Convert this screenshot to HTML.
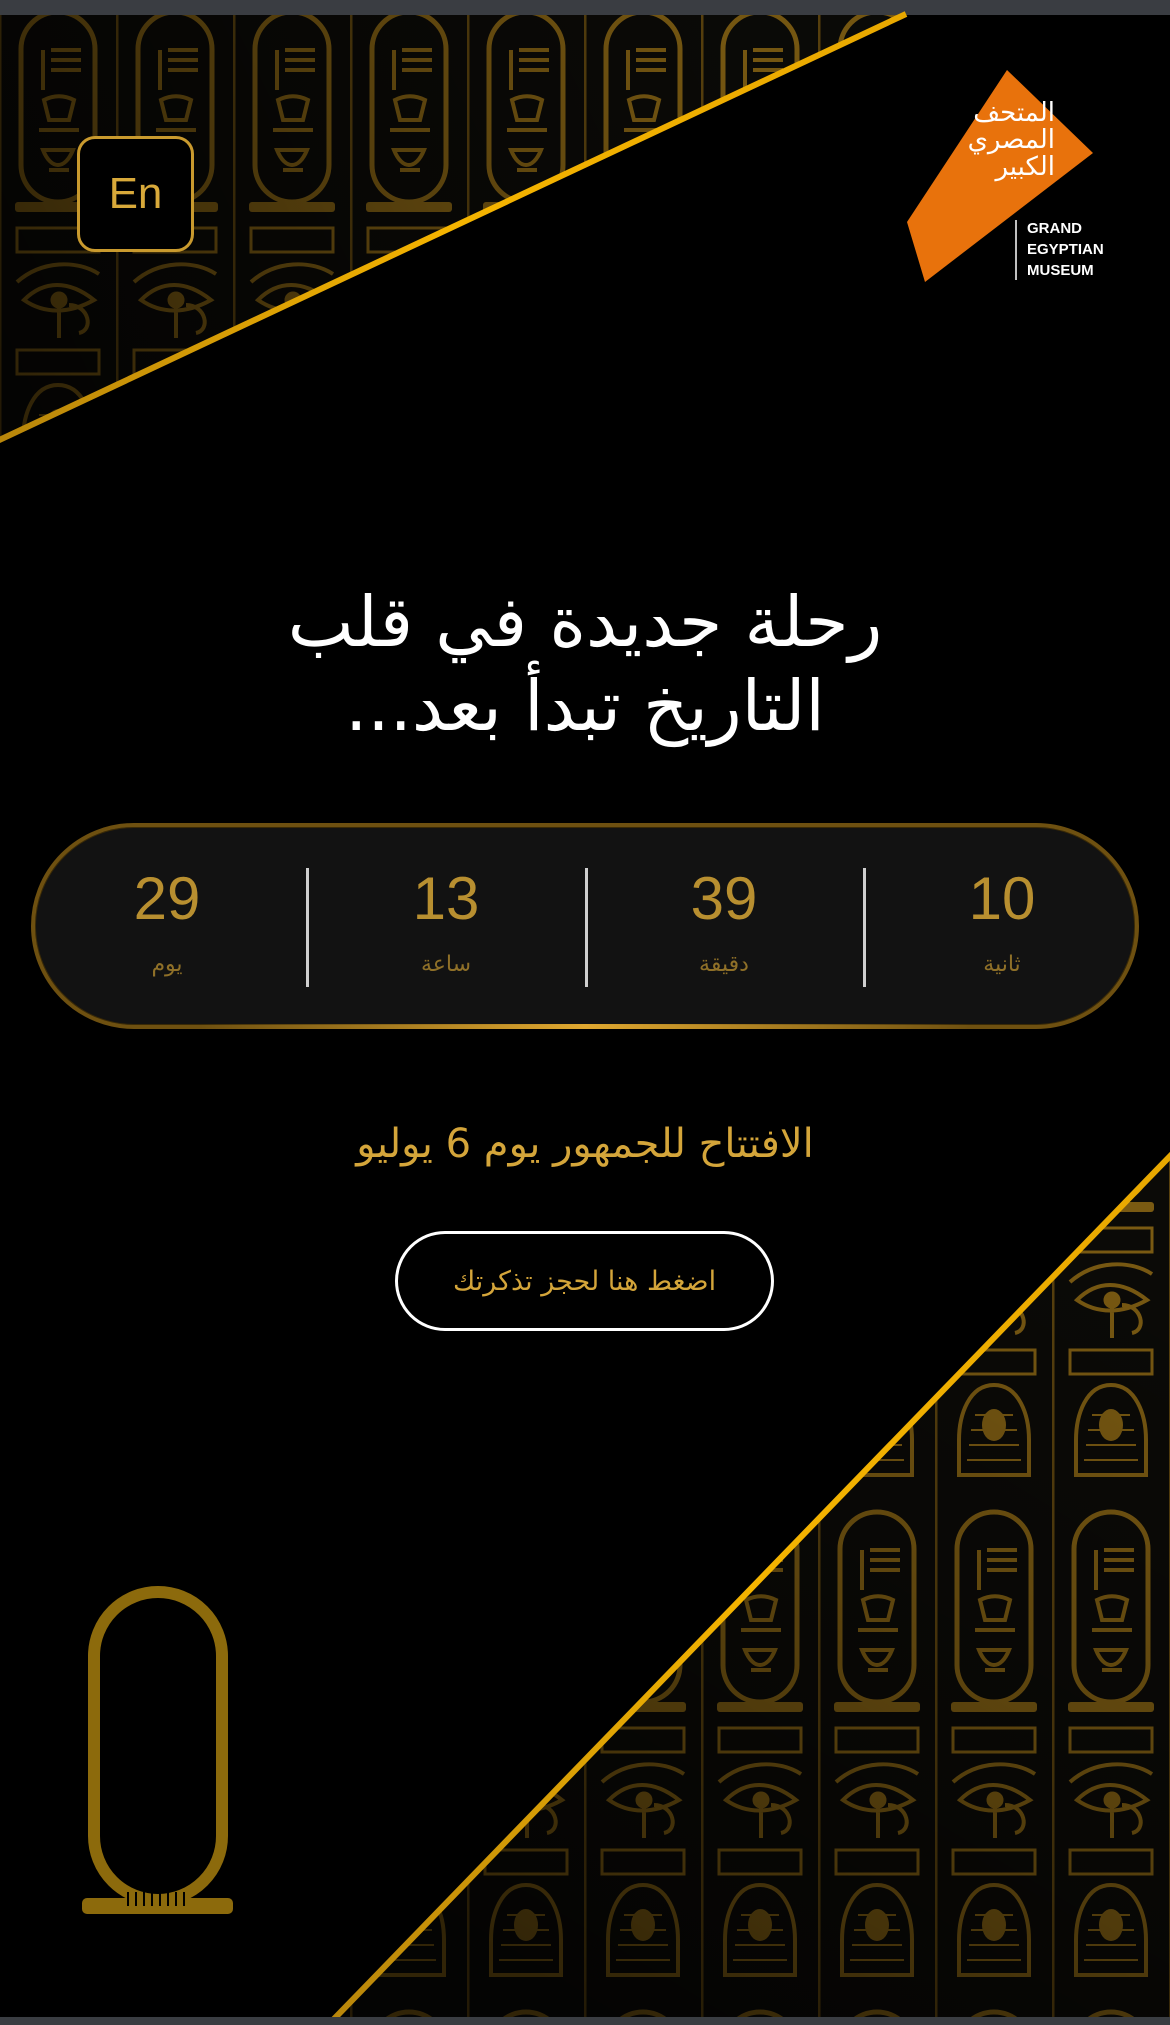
<!DOCTYPE html>
<html><head><meta charset="utf-8">
<style>
*{margin:0;padding:0;box-sizing:border-box}
html,body{width:1170px;height:2025px;background:#000;overflow:hidden}
body{position:relative;font-family:"DejaVu Sans","Liberation Sans",sans-serif}
.abs{position:absolute}
#bg{position:absolute;left:0;top:0}
.en{left:77px;top:136px;width:117px;height:116px;border:3px solid #c99a2e;border-radius:18px;color:#d8a93a;font-family:"Liberation Sans",sans-serif;font-size:44px;display:flex;align-items:center;justify-content:center;background:#000}
.h1{left:0;width:1170px;text-align:center;color:#fff;font-size:70px;line-height:84px;top:580px;direction:rtl}
.pill{left:31px;top:823px;width:1108px;height:206px;border-radius:103px;background:#121212;border:4px solid #6e5010;box-shadow:inset 0 0 0 1px #3a2a06}
.pillb{left:200px;top:1024px;width:770px;height:5px;background:linear-gradient(90deg,rgba(200,150,40,0),#e0a830,rgba(200,150,40,0))}
.div{width:3px;height:119px;top:868px;background:#cfcfcf}
.col{width:240px;text-align:center}
.num{top:864px;color:#b88f30;font-family:"Liberation Sans",sans-serif;font-size:60px;line-height:70px}
.lab{top:948px;color:#8f7028;font-size:22px;line-height:34px;direction:rtl}
.open{left:0;width:1170px;top:1116px;text-align:center;color:#d4a53a;font-size:40px;line-height:56px;direction:rtl}
.btn{left:395px;top:1231px;width:379px;height:100px;border:3px solid #fff;border-radius:50px;color:#d4a53a;font-size:27px;display:flex;align-items:center;justify-content:center;direction:rtl}
.gem{left:1027px;top:218px;color:#fff;font-family:"Liberation Sans",sans-serif;font-weight:bold;font-size:15px;line-height:21px}
.ar{color:#fff;font-size:26px;line-height:27px;direction:rtl;text-align:right}
</style></head><body>
<svg id="bg" width="1170" height="2025" viewBox="0 0 1170 2025">
<defs>
<pattern id="hg" patternUnits="userSpaceOnUse" x="-1" y="0" width="117" height="500">
<rect width="117" height="500" fill="#0b0a07"/>
<line x1="1" y1="0" x2="1" y2="500" stroke="#5a420e" stroke-width="3"/>
<g stroke="#7a5a12" fill="none">
<rect x="22" y="12" width="74" height="190" rx="37" stroke-width="5"/>
<rect x="16" y="202" width="86" height="10" rx="3" fill="#7a5a12" stroke="none"/>
<path d="M44 50v40M52 50h30M52 60h30M52 70h30" stroke-width="4"/>
<path d="M45 100c10-5 20-5 30 0l-5 20h-20z M40 130h40M44 150c8 20 22 20 30 0z M50 170h20" stroke-width="4"/>
<rect x="18" y="228" width="82" height="24" stroke-width="3"/>
<path d="M18 282c25-22 60-22 82-8M25 300c20-20 45-20 70 0c-25 14-50 14-70 0zM60 302v36M70 305c20 0 25 25 10 28" stroke-width="4"/>
<circle cx="60" cy="300" r="8" fill="#7a5a12"/>
<rect x="18" y="350" width="82" height="24" stroke-width="3"/>
<path d="M59 385c-25 0-35 30-35 55v35h70v-35c0-25-10-55-35-55z" stroke-width="4"/>
<path d="M40 415h38M36 430h46M34 445h50M32 460h54" stroke-width="2"/>
<ellipse cx="59" cy="425" rx="12" ry="16" fill="#7a5a12" stroke="none"/>
</g>
</pattern>
<linearGradient id="fadeB" gradientUnits="userSpaceOnUse" x1="1100" y1="1200" x2="600" y2="2017">
<stop offset="0" stop-color="#000" stop-opacity="0"/><stop offset="0.5" stop-color="#000" stop-opacity="0.25"/><stop offset="1" stop-color="#000" stop-opacity="0.6"/></linearGradient>
<linearGradient id="fadeT" gradientUnits="userSpaceOnUse" x1="700" y1="15" x2="0" y2="350">
<stop offset="0" stop-color="#000" stop-opacity="0.05"/><stop offset="1" stop-color="#000" stop-opacity="0.6"/></linearGradient>
<linearGradient id="gl" x1="0" y1="0" x2="1" y2="0">
<stop offset="0" stop-color="#b8860b"/><stop offset="0.5" stop-color="#f5b400"/><stop offset="1" stop-color="#e8a800"/></linearGradient>
</defs>
<rect x="0" y="0" width="1170" height="15" fill="#3a3d42"/>
<polygon points="0,15 904,15 0,439" fill="url(#hg)"/>
<polygon points="0,15 904,15 0,439" fill="url(#fadeT)"/>
<line x1="-5" y1="442" x2="906" y2="14" stroke="url(#gl)" stroke-width="6"/>
<polygon points="1170,1156 1170,2017 336,2017" fill="url(#hg)"/>
<polygon points="1170,1156 1170,2017 336,2017" fill="url(#fadeB)"/>
<line x1="1174" y1="1152" x2="332" y2="2021" stroke="url(#gl)" stroke-width="6"/>
<rect x="0" y="2017" width="1170" height="8" fill="#3a3d42"/>
<rect x="94" y="1592" width="128" height="308" rx="64" fill="none" stroke="#8c6a0c" stroke-width="12"/>
<rect x="82" y="1898" width="151" height="16" rx="5" fill="#8c6a0c"/>
<g stroke="#000" stroke-width="2"><path d="M128 1892v14M136 1892v14M144 1892v14M152 1892v14M160 1892v14M168 1892v14M176 1892v14M184 1892v14"/></g>
<polygon points="1007,70 1093,153 925,282 907,222" fill="#e8720c"/>
<line x1="1016" y1="220" x2="1016" y2="280" stroke="#fff" stroke-width="1.5"/>
</svg>
<div class="abs ar" style="left:955px;top:100px;width:100px">المتحف<br>المصري<br>الكبير</div>
<div class="abs gem">GRAND<br>EGYPTIAN<br>MUSEUM</div>
<div class="abs en">En</div>
<div class="abs h1">رحلة جديدة في قلب<br>التاريخ تبدأ بعد...</div>
<div class="abs pill"></div>
<div class="abs pillb"></div>
<div class="abs div" style="left:306px"></div>
<div class="abs div" style="left:585px"></div>
<div class="abs div" style="left:863px"></div>
<div class="abs col num" style="left:47px">29</div>
<div class="abs col num" style="left:326px">13</div>
<div class="abs col num" style="left:604px">39</div>
<div class="abs col num" style="left:882px">10</div>
<div class="abs col lab" style="left:47px">يوم</div>
<div class="abs col lab" style="left:326px">ساعة</div>
<div class="abs col lab" style="left:604px">دقيقة</div>
<div class="abs col lab" style="left:882px">ثانية</div>
<div class="abs open">الافتتاح للجمهور يوم 6 يوليو</div>
<div class="abs btn">اضغط هنا لحجز تذكرتك</div>
</body></html>
